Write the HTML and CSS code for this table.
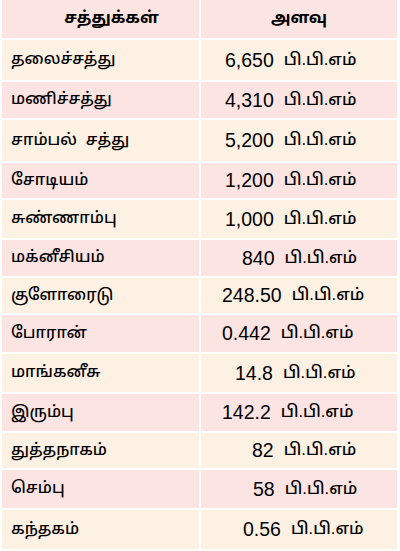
FILE: index.html
```html
<!DOCTYPE html>
<html lang="ta">
<head>
<meta charset="utf-8">
<title>சத்துக்கள்</title>
<link rel="stylesheet" href="styles.css">
</head>
<body>
<div class="table">
  <div class="cell head head-left pink">சத்துக்கள்</div>
  <div class="cell head pink">அளவு</div>

  <div class="cell name cream">தலைச்சத்து</div>
  <div class="cell val at-24 cream"><span class="num">6,650</span><span class="unit">பி.பி.எம்</span></div>

  <div class="cell name pink">மணிச்சத்து</div>
  <div class="cell val at-24 pink"><span class="num">4,310</span><span class="unit">பி.பி.எம்</span></div>

  <div class="cell name cream">சாம்பல்&nbsp; சத்து</div>
  <div class="cell val at-24 cream"><span class="num">5,200</span><span class="unit">பி.பி.எம்</span></div>

  <div class="cell name pink">சோடியம்</div>
  <div class="cell val at-24 pink"><span class="num">1,200</span><span class="unit">பி.பி.எம்</span></div>

  <div class="cell name cream">சுண்ணாம்பு</div>
  <div class="cell val at-24 cream"><span class="num">1,000</span><span class="unit">பி.பி.எம்</span></div>

  <div class="cell name pink">மக்னீசியம்</div>
  <div class="cell val at-41 pink"><span class="num">840</span><span class="unit">பி.பி.எம்</span></div>

  <div class="cell name cream">குளோரைடு</div>
  <div class="cell val at-21 cream"><span class="num">248.50</span><span class="unit">பி.பி.எம்</span></div>

  <div class="cell name pink">போரான்</div>
  <div class="cell val at-21 pink"><span class="num">0.442</span><span class="unit">பி.பி.எம்</span></div>

  <div class="cell name cream">மாங்கனீசு</div>
  <div class="cell val at-34 cream"><span class="num">14.8</span><span class="unit">பி.பி.எம்</span></div>

  <div class="cell name pink">இரும்பு</div>
  <div class="cell val at-21 pink"><span class="num">142.2</span><span class="unit">பி.பி.எம்</span></div>

  <div class="cell name cream">துத்தநாகம்</div>
  <div class="cell val at-51 cream"><span class="num">82</span><span class="unit">பி.பி.எம்</span></div>

  <div class="cell name pink">செம்பு</div>
  <div class="cell val at-52 pink"><span class="num">58</span><span class="unit">பி.பி.எம்</span></div>

  <div class="cell name cream">கந்தகம்</div>
  <div class="cell val at-42 cream"><span class="num">0.56</span><span class="unit">பி.பி.எம்</span></div>
</div>
</body>
</html>
```
FILE: styles.css
```css
html, body {
  margin: 0;
  padding: 0;
  background: #ffffff;
}

body {
  font-family: "Liberation Sans", "Noto Sans", "Noto Sans Tamil", sans-serif;
  font-size: 19px;
  color: #000000;
}

.table {
  display: grid;
  grid-template-columns: 197px 196px;
  grid-template-rows: 38px 40px 36px 41px 35px 38px 36px 35px 37px 38px 37px 35px 38px 39px;
  gap: 2px;
  padding: 0 0 0 2px;
}

.cell {
  display: flex;
  align-items: center;
  white-space: nowrap;
}

.pink {
  background: #fce4e3;
}

.cream {
  background: #fdf1e3;
}

.head {
  justify-content: center;
  font-weight: bold;
  font-size: 16px;
}

.head-left {
  padding-left: 22px;
}

.name {
  padding-left: 9px;
  font-size: 16px;
  font-weight: 500;
}

.val {
  justify-content: flex-start;
}

.at-21 { padding-left: 21px; }
.at-24 { padding-left: 24px; }
.at-34 { padding-left: 34px; }
.at-41 { padding-left: 41px; }
.at-42 { padding-left: 42px; }
.at-51 { padding-left: 51px; }
.at-52 { padding-left: 52px; }

.num {
  font-size: 19.5px;
  margin-right: 10px;
}

.unit {
  font-size: 16.5px;
  font-weight: 500;
}
```
